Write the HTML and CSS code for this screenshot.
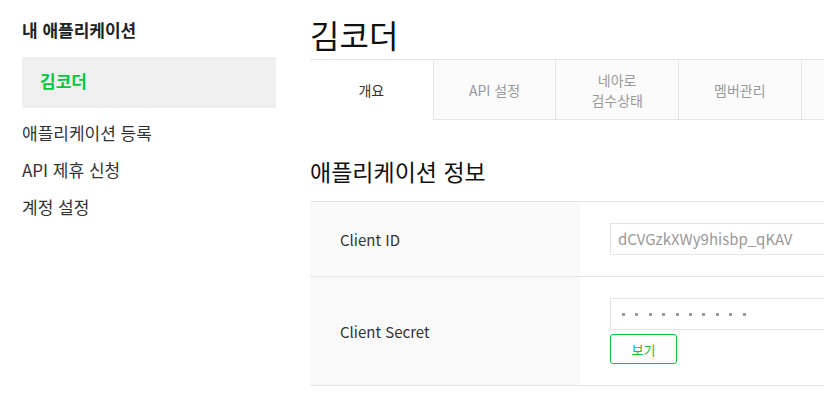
FILE: index.html
```html
<!DOCTYPE html>
<html lang="ko">
<head>
<meta charset="utf-8">
<title>김코더</title>
<link rel="stylesheet" href="styles.css">
</head>
<body>
<div class="page">
  <aside class="sidebar">
    <div class="side-title">내 애플리케이션</div>
    <div class="side-active">김코더</div>
    <ul class="side-menu">
      <li>애플리케이션 등록</li>
      <li>API 제휴 신청</li>
      <li>계정 설정</li>
    </ul>
  </aside>
  <main class="main">
    <h1 class="app-title">김코더</h1>
    <ul class="tabs">
      <li class="tab active">개요</li>
      <li class="tab">API 설정</li>
      <li class="tab">네아로<br>검수상태</li>
      <li class="tab">멤버관리</li>
      <li class="tab"></li>
    </ul>
    <h2 class="section-title">애플리케이션 정보</h2>
    <div class="info-table">
      <div class="row">
        <div class="label">Client ID</div>
        <div class="value">
          <div class="field">dCVGzkXWy9hisbp_qKAV</div>
        </div>
      </div>
      <div class="row">
        <div class="label">Client Secret</div>
        <div class="value">
          <div class="field pw"><span class="dot"></span><span class="dot"></span><span class="dot"></span><span class="dot"></span><span class="dot"></span><span class="dot"></span><span class="dot"></span><span class="dot"></span><span class="dot"></span><span class="dot"></span></div>
          <button class="btn-show" type="button">보기</button>
        </div>
      </div>
    </div>
  </main>
</div>
</body>
</html>
```
FILE: styles.css
```css
html, body {
  margin: 0;
  padding: 0;
  overflow: hidden;
  background: #fff;
}
body {
  font-family: "Noto Sans CJK KR", "Noto Sans", sans-serif;
  color: #333;
}
.page {
  display: flex;
  width: 1200px;
}
.sidebar {
  width: 254px;
  flex: none;
  padding: 18px 0 0 22px;
}
.side-title {
  font-size: 17px;
  font-weight: 700;
  line-height: 24px;
  color: #222;
  margin-bottom: 15px;
}
.side-active {
  height: 51px;
  line-height: 48px;
  background: #efefef;
  padding-left: 18px;
  font-size: 17px;
  font-weight: 700;
  color: #00c73c;
}
.side-menu {
  list-style: none;
  margin: 6px 0 0;
  padding: 0;
}
.side-menu li {
  height: 37px;
  line-height: 37px;
  font-size: 17px;
  color: #333;
}
.main {
  margin-left: 34px;
  width: 860px;
  flex: none;
}
.app-title {
  margin: 14px 0 4px;
  font-size: 32px;
  font-weight: 400;
  line-height: 41px;
  color: #111;
}
.tabs {
  display: flex;
  list-style: none;
  margin: 0;
  padding: 0;
  border-top: 1px solid #e5e5e5;
}
.tab {
  width: 122.67px;
  height: 60px;
  box-sizing: border-box;
  display: flex;
  align-items: center;
  justify-content: center;
  text-align: center;
  font-size: 14px;
  line-height: 20px;
  color: #999;
  background: #fbfbfb;
  border-left: 1px solid #e5e5e5;
  border-bottom: 1px solid #e5e5e5;
}
.tab.active {
  background: #fff;
  border-left: none;
  border-bottom: none;
  color: #333;
}
.section-title {
  margin: 36px 0 15px;
  font-size: 23px;
  font-weight: 400;
  line-height: 30px;
  color: #111;
}
.info-table {
  border-top: 1px solid #e5e5e5;
}
.row {
  display: flex;
  border-bottom: 1px solid #e5e5e5;
}
.label {
  width: 240px;
  flex: none;
  padding-left: 30px;
  background: #f9f9f9;
  display: flex;
  align-items: center;
  font-size: 15px;
  color: #333;
}
.value {
  flex: 1;
  padding: 21px 0 21px 30px;
  display: flex;
  flex-direction: column;
  align-items: flex-start;
  gap: 4px;
}
.field {
  width: 400px;
  height: 32px;
  box-sizing: border-box;
  border: 1px solid #e5e5e5;
  padding-left: 7px;
  line-height: 30px;
  font-size: 15px;
  color: #999;
}
.field.pw {
  display: flex;
  align-items: center;
  padding-left: 11px;
}
.dot {
  width: 3px;
  height: 3px;
  background: #9a9a9a;
  margin-right: 10.4px;
}
.btn-show {
  width: 67px;
  height: 30px;
  box-sizing: border-box;
  border: 1px solid #00c73c;
  border-radius: 3px;
  background: #fdfdfd;
  color: #00c73c;
  font-family: inherit;
  font-size: 13px;
  padding: 0;
  cursor: pointer;
}
```
